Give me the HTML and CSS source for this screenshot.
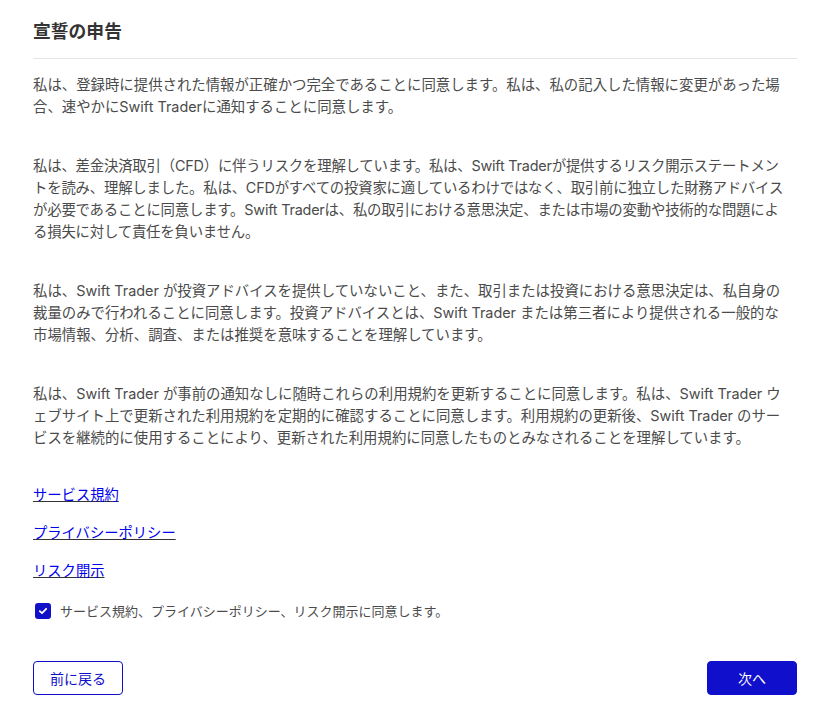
FILE: index.html
```html
<!DOCTYPE html>
<html lang="ja">
    <head>
        <meta charset="UTF-8">
        <meta name="viewport" content="width=device-width, initial-scale=1.0">
        <title>宣誓の申告</title>
        <link rel="stylesheet" href="styles.css">
    </head>
    <body>
        <div class="wrap">
            <h2 class="title">宣誓の申告</h2>
            <div class="text">
                <p>私は、登録時に提供された情報が正確かつ完全であることに同意します。私は、私の記入した情報に変更があった場合、速やかにSwift Traderに通知することに同意します。</p>
                <p class="tight">私は、差金決済取引（CFD）に伴うリスクを理解しています。私は、Swift Traderが提供するリスク開示ステートメン<br>トを読み、理解しました。私は、CFDがすべての投資家に適しているわけではなく、取引前に独立した財務アドバイス<br>が必要であることに同意します。Swift Traderは、私の取引における意思決定、または市場の変動や技術的な問題によ<br>る損失に対して責任を負いません。</p>
                <p>私は、Swift Trader が投資アドバイスを提供していないこと、また、取引または投資における意思決定は、私自身の裁量のみで行われることに同意します。投資アドバイスとは、Swift Trader または第三者により提供される一般的な市場情報、分析、調査、または推奨を意味することを理解しています。</p>
                <p>私は、Swift Trader が事前の通知なしに随時これらの利用規約を更新することに同意します。私は、Swift Trader ウェブサイト上で更新された利用規約を定期的に確認することに同意します。利用規約の更新後、Swift Trader のサービスを継続的に使用することにより、更新された利用規約に同意したものとみなされることを理解しています。</p>
            </div>
            <div class="links">
                <a href="#">サービス規約</a>
                <a href="#">プライバシーポリシー</a>
                <a href="#">リスク開示</a>
            </div>
            <label class="agree">
                <span class="check">
                    <svg width="10" height="10" viewBox="0 0 10 10"><path d="M1.8 5.2 L4 7.2 L8.2 2.8" fill="none" stroke="#fff" stroke-width="1.8" stroke-linecap="round" stroke-linejoin="round"/></svg>
                </span>
                サービス規約、プライバシーポリシー、リスク開示に同意します。
            </label>
            <div class="actions">
                <button type="button" class="btn btn-outline">前に戻る</button>
                <button type="button" class="btn btn-primary">次へ</button>
            </div>
        </div>
    </body>
</html>
```

FILE: styles.css
```css
body{
    margin: 0;
    background: #fff;
    font-family: Inter, "Noto Sans CJK JP", sans-serif;
}
.wrap{
    width: 764px;
    margin-left: 33px;
    padding-top: 17px;
}
.title{
    margin: 0;
    font-family: "Noto Sans CJK JP", sans-serif;
    font-size: 17.8px;
    line-height: 27px;
    font-weight: 700;
    color: #333;
    padding-bottom: 14px;
    border-bottom: 1px solid #e4e4e4;
}
.text{
    margin-top: 15px;
    width: 756px;
}
.text p{
    margin: 0 0 37px;
    font-size: 14.4px;
    line-height: 22px;
    color: #4b4b4b;
}
.text p.tight{
    letter-spacing: -0.2px;
    width: 764px;
}
.links{
    display: flex;
    flex-direction: column;
    align-items: flex-start;
    gap: 16px;
    margin-top: -3px;
}
.links a{
    font-family: "Noto Sans CJK JP", sans-serif;
    font-size: 14.3px;
    line-height: 22px;
    color: #0000ee;
    text-decoration: underline;
    text-decoration-color: #333;
}
.agree{
    display: flex;
    align-items: center;
    gap: 9px;
    margin-top: 20px;
    margin-left: 2px;
    font-family: "Noto Sans CJK JP", sans-serif;
    font-size: 13px;
    line-height: 20px;
    color: #4b4b4b;
}
.check{
    width: 16px;
    height: 16px;
    border-radius: 3px;
    background: #1010c9;
    display: flex;
    align-items: center;
    justify-content: center;
}
.actions{
    display: flex;
    justify-content: space-between;
    margin-top: 40px;
}
.btn{
    width: 90px;
    height: 34px;
    border-radius: 4px;
    font-family: "Noto Sans CJK JP", sans-serif;
    font-size: 14px;
    cursor: pointer;
}
.btn-outline{
    background: #fff;
    border: 1px solid #1010c9;
    color: #1010c9;
}
.btn-primary{
    background: #0f0fcc;
    border: 1px solid #0f0fcc;
    color: #fff;
}
```
